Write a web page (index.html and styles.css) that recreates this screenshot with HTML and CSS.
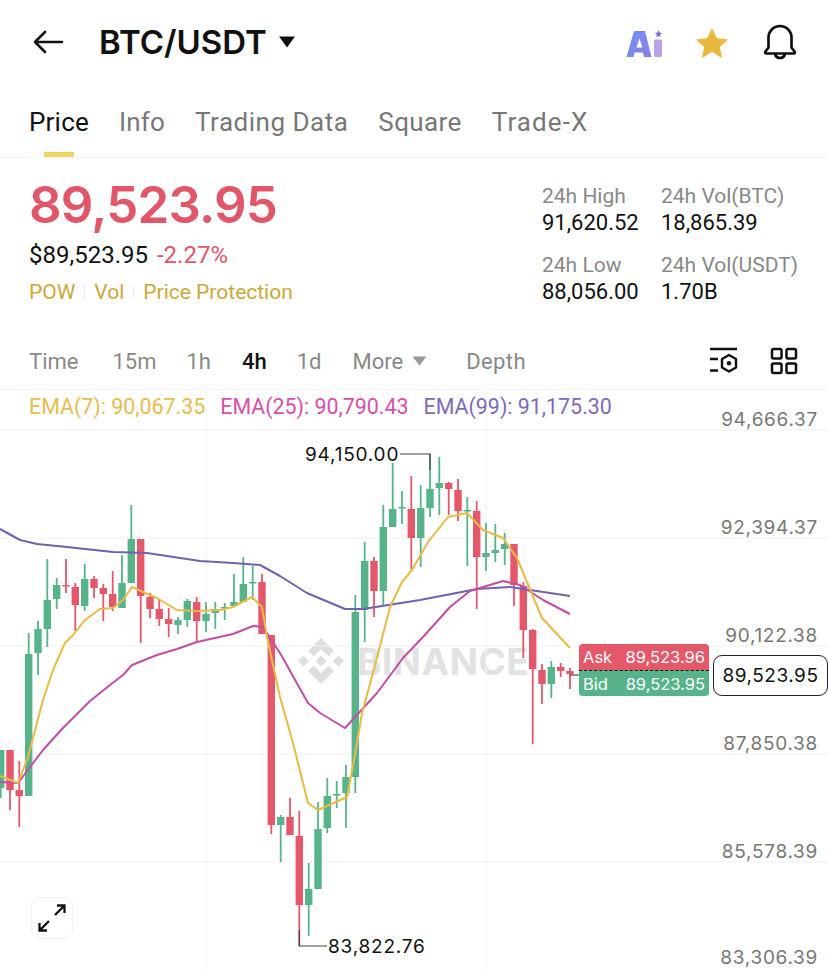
FILE: index.html
```html
<!DOCTYPE html>
<html lang="en">
<head>
    <meta charset="UTF-8">
    <meta name="viewport" content="width=device-width, initial-scale=1.0">
    <title>BTC/USDT</title>
    <link rel="stylesheet" href="styles.css">
</head>
<body>
    <div class="topbar">
        <svg class="back-icon" width="32" height="26" viewBox="0 0 32 26"><path d="M30 13H3M13 3L3 13l10 10" fill="none" stroke="#111" stroke-width="2.600" stroke-linecap="round" stroke-linejoin="round"/></svg>
        <div class="pair">BTC/USDT</div>
        <svg class="pair-caret" width="18" height="12" viewBox="0 0 18 12"><path d="M1 0.500h16L9 11.500z" fill="#111"/></svg>
        <div class="top-icons">
            <svg class="ai-icon" width="37" height="30" viewBox="0 0 37 30">
                <defs><linearGradient id="aiFill" x1="0" y1="0" x2="1" y2="1"><stop offset="0" stop-color="#6e93f5"/><stop offset="1" stop-color="#8a7ee8"/></linearGradient></defs>
                <path d="M8 2h11l6.500 26h-7.500l-1-4.500H8.500L7.500 28H0.500z" fill="url(#aiFill)"/>
                <path d="M13.500 9.500l-3 9h6z" fill="#fff"/>
                <rect x="28" y="10.500" width="8" height="17.500" rx="1.500" fill="#b7a3e8"/>
                <path d="M32.500 1l1 2.600 2.600.4-2 1.800.5 2.700-2.100-1.400-2.300 1.400.6-2.700-2-1.800 2.700-.4z" fill="#7f6cd6"/>
            </svg>
            <svg class="star-icon" width="32" height="32" viewBox="0 0 34 32"><path d="M17 1.500l4.600 10 11 1.200-8.200 7.300 2.400 10.800L17 24.500 7.200 30.800l2.400-10.800L1.400 12.700l11-1.200z" fill="#e9b93f" stroke="#e9b93f" stroke-width="1.500" stroke-linejoin="round"/></svg>
            <svg width="34" height="36" viewBox="0 0 34 36"><path d="M5.500 23.500V13.500a11.500 11.500 0 0 1 23 0v10l3.200 4.200c.5.800 0 1.800-1 1.800H3.300c-1 0-1.500-1-1-1.800zM12 30c.8 2.600 2.600 4 5 4s4.200-1.400 5-4" fill="none" stroke="#111" stroke-width="2.700" stroke-linejoin="round" stroke-linecap="round"/></svg>
        </div>
    </div>

    <div class="tabs">
        <div class="tab active">Price</div>
        <div class="tab">Info</div>
        <div class="tab trading">Trading Data</div>
        <div class="tab square">Square</div>
        <div class="tab tradex">Trade-X</div>
    </div>

    <div class="summary">
        <div class="summary-left">
            <div class="last-price">89,523.95</div>
            <div class="fiat-row"><span class="fiat">$89,523.95</span><span class="change">-2.27%</span></div>
            <div class="tag-row"><span>POW</span><i></i><span>Vol</span><i></i><span>Price Protection</span></div>
        </div>
        <div class="stats">
            <div class="stat"><div class="stat-label">24h High</div><div class="stat-value">91,620.52</div></div>
            <div class="stat"><div class="stat-label">24h Vol(BTC)</div><div class="stat-value">18,865.39</div></div>
            <div class="stat"><div class="stat-label">24h Low</div><div class="stat-value">88,056.00</div></div>
            <div class="stat"><div class="stat-label">24h Vol(USDT)</div><div class="stat-value">1.70B</div></div>
        </div>
    </div>

    <div class="intervals">
        <span class="interval time">Time</span>
        <span class="interval mins">15m</span>
        <span class="interval">1h</span>
        <span class="interval current">4h</span>
        <span class="interval">1d</span>
        <span class="interval more">More<svg width="15" height="10" viewBox="0 0 15 10"><path d="M0.500 0.500h14L7.500 9.500z" fill="#999"/></svg></span>
        <span class="interval depth">Depth</span>
        <div class="interval-icons">
            <svg width="30" height="30" viewBox="0 0 30 30" fill="none" stroke="#111" stroke-width="2.400">
                <path d="M1 3h27M1 13h8M1 24.500h8"/>
                <path d="M20 9l7 4v8.500l-7 4-7-4V13z" stroke-linejoin="round"/>
                <circle cx="20" cy="17.300" r="2.200" fill="#111" stroke="none"/>
            </svg>
            <svg width="28" height="28" viewBox="0 0 28 28" fill="none" stroke="#111" stroke-width="2.500">
                <rect x="2" y="2" width="9.500" height="9.500" rx="1.500"/>
                <rect x="16.500" y="2" width="9.500" height="9.500" rx="1.500"/>
                <rect x="2" y="16.500" width="9.500" height="9.500" rx="1.500"/>
                <rect x="16.500" y="16.500" width="9.500" height="9.500" rx="1.500"/>
            </svg>
        </div>
    </div>

    <div class="chart">
        <div class="watermark">
            <svg width="46" height="46" viewBox="0 0 100 100" fill="#dedede">
                <path d="M50 0L78 28 66 40 50 24 34 40 22 28zM0 50L12 38 24 50 12 62zM76 50L88 38 100 50 88 62zM50 38L62 50 50 62 38 50zM50 100L22 72 34 60 50 76 66 60 78 72z"/>
            </svg>
            <span>BINANCE</span>
        </div>

        <svg id="chartSvg" class="chart-svg" width="828" height="581" viewBox="0 389 828 581"></svg>

        <div class="legend">
            <span class="ema7">EMA(7): 90,067.35</span>
            <span class="ema25">EMA(25): 90,790.43</span>
            <span class="ema99">EMA(99): 91,175.30</span>
        </div>

        <div class="axis-label axis-1">94,666.37</div>
        <div class="axis-label axis-2">92,394.37</div>
        <div class="axis-label axis-3">90,122.38</div>
        <div class="axis-label axis-4">87,850.38</div>
        <div class="axis-label axis-5">85,578.39</div>
        <div class="axis-label axis-6">83,306.39</div>

        <div class="extreme high">94,150.00</div>
        <div class="extreme low">83,822.76</div>

        <div class="quote">
            <div class="quote-row ask"><span>Ask</span><span>89,523.96</span></div>
            <div class="quote-row bid"><span>Bid</span><span>89,523.95</span></div>
        </div>
        <div class="price-tag">89,523.95</div>

        <div class="expand-btn">
            <svg width="30" height="30" viewBox="0 0 30 30" fill="none" stroke="#111" stroke-width="2.300"><path d="M18 12l9-9M20 2.500h7.500V10M12 18l-9 9M2.500 20v7.500H10"/></svg>
        </div>
    </div>

    <script src="chart.js"></script>
</body>
</html>
```

FILE: styles.css
```css
body {
    margin: 0;
    width: 828px;
    height: 970px;
    overflow: hidden;
    background: #fff;
    color: #111;
    font-family: Inter, "Liberation Sans", sans-serif;
}
.topbar {
    display: flex;
    align-items: center;
    height: 84px;
    padding: 0 32px;
}
.back-icon {
    margin-right: 35px;
}
.pair {
    font-size: 33px;
    font-weight: 600;
}
.pair-caret {
    margin-left: 11px;
}
.top-icons {
    display: flex;
    align-items: center;
    margin-left: auto;
    margin-right: -1px;
}
.ai-icon {
    margin: 4px 33px 0 0;
}
.star-icon {
    margin: 2px 35px 0 0;
}
.tabs {
    display: flex;
    gap: 30px;
    height: 74px;
    padding-left: 29px;
    border-bottom: 1px solid #f4f4f4;
    box-sizing: border-box;
}
.tab {
    position: relative;
    padding-top: 23px;
    font-family: Roboto, sans-serif;
    font-size: 26px;
    letter-spacing: 0.2px;
    color: #777;
}
.tab.active {
    color: #111;
}
.tab.active::after {
    content: "";
    position: absolute;
    left: 15px;
    bottom: 0;
    width: 30px;
    height: 5px;
    background: #f0d465;
}
.tab.trading {
    letter-spacing: 0.5px;
}
.tab.square {
    letter-spacing: 0.4px;
}
.tab.tradex {
    letter-spacing: 1.1px;
}
.summary {
    display: flex;
    justify-content: space-between;
    height: 178px;
    padding: 20px 29px 0;
    box-sizing: border-box;
}
.last-price {
    font-size: 51px;
    line-height: 54px;
    font-weight: 600;
    color: #e2566a;
    letter-spacing: -0.8px;
}
.fiat-row {
    display: flex;
    gap: 9px;
    margin-top: 9px;
    font-family: Roboto, sans-serif;
    font-size: 24px;
    line-height: 28px;
}
.change {
    color: #e2566a;
}
.tag-row {
    display: flex;
    align-items: center;
    margin-top: 9px;
    font-family: Roboto, sans-serif;
    font-size: 21px;
    line-height: 28px;
    color: #c9a93b;
}
.tag-row i {
    width: 1px;
    height: 14px;
    margin: 0 9px;
    background: #ececec;
}
.stats {
    display: grid;
    grid-template-columns: 119px 138px;
    grid-auto-rows: 69px;
    margin: 5px 0 0;
    font-family: Roboto, sans-serif;
    font-size: 21px;
}
.stat-label {
    color: #888;
    line-height: 26px;
}
.stat-value {
    font-size: 22px;
    line-height: 28px;
    color: #111;
}
.intervals {
    display: flex;
    align-items: center;
    height: 53px;
    padding: 0 0 3px 29px;
    box-sizing: border-box;
    font-family: Roboto, sans-serif;
    font-size: 22px;
    color: #888;
}
.interval {
    margin-right: 31px;
}
.interval.time {
    margin-right: 34px;
}
.interval.mins {
    margin-right: 30px;
}
.interval.current {
    color: #111;
    font-weight: 500;
    margin-right: 30px;
}
.more {
    display: flex;
    align-items: center;
    gap: 9px;
}
.depth {
    margin-left: 8px;
    letter-spacing: 0.4px;
}
.interval-icons {
    display: flex;
    align-items: center;
    gap: 31px;
    margin-left: auto;
    margin-right: 30px;
}
.chart {
    position: relative;
    height: 581px;
    border-top: 1px solid #f4f4f4;
    box-sizing: border-box;
}
.chart-svg {
    position: absolute;
    left: 0;
    top: -1px;
}
.legend {
    position: absolute;
    left: 29px;
    top: 3px;
    display: flex;
    gap: 15px;
    font-family: Roboto, sans-serif;
    font-size: 21.4px;
    line-height: 28px;
    white-space: nowrap;
}
.ema7 { color: #e6bd50; }
.ema25 { color: #d750ac; }
.ema99 { color: #7f6bb5; }
.axis-label {
    position: absolute;
    right: 10px;
    font-size: 19px;
    line-height: 24px;
    color: #777;
    letter-spacing: 0.7px;
}
.axis-1 { top: 18px; }
.axis-2 { top: 126px; }
.axis-3 { top: 234px; }
.axis-4 { top: 342px; }
.axis-5 { top: 450px; }
.axis-6 { top: 556px; }
.extreme {
    position: absolute;
    font-size: 19px;
    line-height: 24px;
    letter-spacing: 0.8px;
    color: #111;
}
.high { left: 305px; top: 53px; }
.low { left: 328px; top: 545px; }
.watermark {
    position: absolute;
    left: 298px;
    top: 248px;
    display: flex;
    align-items: center;
    gap: 13px;
    font-size: 37px;
    font-weight: 700;
    color: #e2e2e2;
    letter-spacing: 0.5px;
}
.quote {
    position: absolute;
    left: 579px;
    top: 254px;
    width: 130px;
    font-size: 16.5px;
    color: #fff;
}
.quote-row {
    display: flex;
    justify-content: space-between;
    height: 26px;
    line-height: 26px;
    padding: 0 4px;
    box-sizing: border-box;
}
.ask {
    background: #e5586a;
    border-radius: 4px 4px 0 0;
}
.bid {
    background: #57b48a;
    border-radius: 0 0 4px 4px;
    border-top: 1px dashed #111;
}
.price-tag {
    position: absolute;
    left: 713px;
    top: 265px;
    width: 115px;
    height: 41px;
    box-sizing: border-box;
    border: 1px solid #222;
    border-radius: 9px;
    text-align: center;
    font-size: 19px;
    line-height: 39px;
    letter-spacing: 0.5px;
    color: #111;
    background: #fff;
}
.expand-btn {
    position: absolute;
    left: 31px;
    top: 507px;
    display: flex;
    align-items: center;
    justify-content: center;
    width: 42px;
    height: 42px;
    box-sizing: border-box;
    border: 1px solid #f2f2f2;
    border-radius: 8px;
    background: #fff;
}
```

FILE: chart.js
```js
// Candles: [x, body-top, body-bottom, wick-top, wick-bottom, up?]
const UP = '#57b48a';
const DOWN = '#e5586a';

const candles = [
    [0.7, 750, 788, 750, 798, 1], [10, 750, 790, 750, 810, 0], [19.3, 790, 796, 761, 827, 0],
    [28.7, 654, 796, 633, 796, 1], [38, 629, 653, 621, 675, 1], [47.3, 600, 629, 559, 647, 1],
    [56.7, 585, 599, 578, 609, 1], [66, 585, 586, 559, 593, 0], [75.3, 587, 605, 583, 631, 0],
    [84.7, 579, 606, 564, 611, 1], [94, 579, 588, 576, 598, 0], [103.3, 588, 594, 584, 621, 0],
    [112.7, 594, 607, 571, 611, 0], [122, 583, 608, 555, 608, 1], [131.3, 539, 583, 505, 583, 1],
    [140.7, 539, 596, 539, 643, 0], [150, 597, 609, 593, 618, 0], [159.3, 609, 619, 600, 626, 0],
    [168.7, 619, 624, 608, 637, 0], [178, 620, 625, 617, 634, 1], [187.3, 601, 620, 599, 627, 1],
    [196.7, 602, 621, 597, 642, 0], [206, 614, 621, 602, 632, 1], [215.3, 609, 613, 602, 629, 1],
    [224.7, 607, 608, 603, 620, 1], [234, 602, 606, 574, 606, 1], [243.3, 584, 602, 557, 602, 1],
    [252.7, 582, 583, 566, 600, 1], [262, 582, 634, 574, 634, 0], [271.3, 635, 825, 635, 834, 0],
    [280.7, 817, 825, 815, 862, 1], [290, 817, 835, 798, 835, 0], [299.3, 836, 905, 811, 946, 0],
    [308.7, 889, 905, 863, 936, 1], [318, 829, 889, 802, 889, 1], [327.3, 796, 828, 778, 833, 1],
    [336.7, 794, 795, 781, 808, 1], [346, 777, 793, 765, 828, 1], [355.3, 612, 777, 595, 793, 1],
    [364.7, 561, 610, 542, 642, 1], [374, 561, 591, 557, 617, 0], [383.3, 527, 591, 505, 605, 1],
    [392.7, 509, 527, 463, 527, 1], [402, 507, 508, 491, 524, 1], [411.3, 509, 538, 476, 569, 0],
    [420.7, 508, 538, 485, 567, 1], [430, 489, 508, 454, 517, 1], [439.3, 483, 488, 457, 515, 1],
    [448.7, 483, 489, 482, 515, 0], [458, 490, 511, 479, 521, 0], [467.3, 510, 511, 497, 566, 1],
    [476.7, 511, 557, 501, 609, 0], [486, 553, 557, 523, 571, 1], [495.3, 550, 553, 524, 562, 1],
    [504.7, 544, 549, 533, 565, 1], [514, 544, 585, 544, 606, 0], [523.3, 586, 630, 582, 658, 0],
    [532.7, 630, 669, 629, 744, 0], [542, 670, 684, 664, 704, 0], [551.3, 667, 684, 661, 698, 1],
    [560.7, 667, 671, 663, 677, 0], [570, 671, 674, 668, 689, 0]
];

const ema99 = '0,529 20,540 37,544 67,547 113,552 147,553 200,561 233,563 260,565 280,576 307,593 345,609 363,609 420,600 477,589 510,587 570,596';
const ema25 = '0,782 18,783 43,750 63,728 90,701 110,685 123,675 132,665 157,655 177,649 197,642 233,634 253,626 263,627 280,653 308,703 320,713 345,728 377,693 403,658 423,637 450,607 470,591 503,581 520,585 543,600 570,614';
const ema7 = '0,776 18,783 28,757 43,700 53,670 65,643 73,635 85,620 100,609 113,608 123,600 132,587 143,592 157,598 177,610 197,611 220,610 233,607 252,597 262,607 267,637 280,697 293,743 308,803 318,810 347,797 355,755 362,713 373,673 390,607 402,582 412,570 428,542 448,517 467,513 483,530 503,538 517,558 542,618 570,648';

const svg = document.getElementById('chartSvg');

function add(tag, attrs) {
    const el = document.createElementNS('http://www.w3.org/2000/svg', tag);
    for (const key in attrs) el.setAttribute(key, attrs[key]);
    svg.appendChild(el);
}

function drawLine(x1, y1, x2, y2, stroke, width) {
    add('line', { x1, y1, x2, y2, stroke, 'stroke-width': width });
}

// Grid
[430, 538, 646, 754, 862].forEach(y => drawLine(0, y, 828, y, '#f2f2f2', 1.2));
[206, 486].forEach(x => drawLine(x, 389, x, 970, '#f3f3f3', 1.2));

// Candles
candles.forEach(([x, top, bottom, wickTop, wickBottom, up]) => {
    const color = up ? UP : DOWN;
    drawLine(x, wickTop, x, wickBottom, color, 1.8);
    add('rect', { x: x - 3.7, y: top, width: 7.4, height: Math.max(bottom - top, 1.5), fill: color });
});

// High / low markers
add('polyline', { points: '400,454 430,454 430,470', fill: 'none', stroke: '#444', 'stroke-width': 1.2 });
add('polyline', { points: '299.3,930 299.3,946 327,946', fill: 'none', stroke: '#444', 'stroke-width': 1.2 });
drawLine(570, 675, 579, 675, '#222', 1);

// EMA lines
[[ema99, '#6f62ae'], [ema25, '#c04fa4'], [ema7, '#e8bb45']].forEach(([points, stroke]) => {
    add('polyline', { points, fill: 'none', stroke, 'stroke-width': 2, 'stroke-linejoin': 'round' });
});
```
